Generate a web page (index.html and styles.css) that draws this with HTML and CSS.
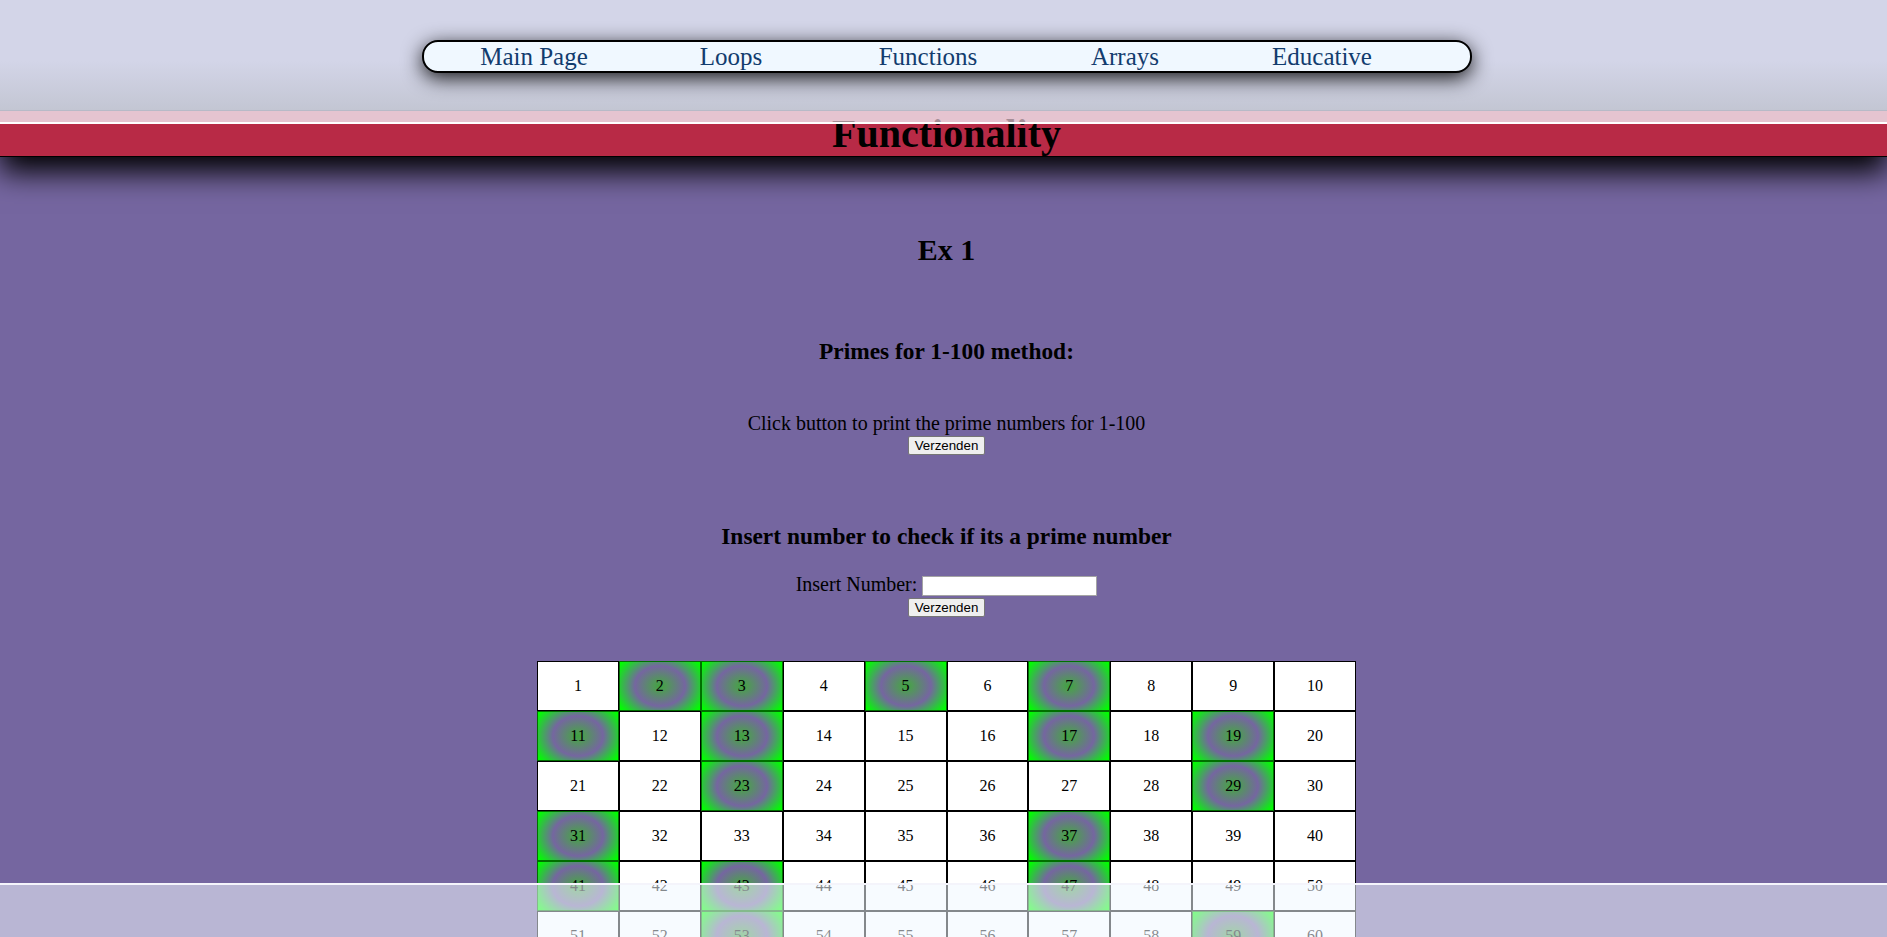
FILE: index.html
```html
<!DOCTYPE html>
<html lang="en">
<head>
<meta charset="utf-8">
<title>Functionality</title>
<link rel="stylesheet" href="styles.css">
</head>
<body>
<header class="site-header">
  <div class="topbar">
    <nav class="nav-pill">
      <a class="nav-link" href="#">Main Page</a>
      <a class="nav-link" href="#">Loops</a>
      <a class="nav-link" href="#">Functions</a>
      <a class="nav-link" href="#">Arrays</a>
      <a class="nav-link" href="#">Educative</a>
    </nav>
  </div>
  <div class="strip"></div>
  <h1 class="page-title">Functionality</h1>
</header>

<main class="content">
  <h2 class="ex-title">Ex 1</h2>

  <h3 class="sub-title primes-title">Primes for 1-100 method:</h3>
  <p class="text-line">Click button to print the prime numbers for 1-100</p>
  <button class="send-btn" type="button">Verzenden</button>

  <h3 class="sub-title check-title">Insert number to check if its a prime number</h3>
  <div class="input-row">
    <label class="input-label" for="num">Insert Number:</label>
    <input class="num-input" id="num" type="text">
  </div>
  <button class="send-btn send-btn-2" type="button">Verzenden</button>

  <div class="grid">
    <div class="cell">1</div><div class="cell prime">2</div><div class="cell prime">3</div><div class="cell">4</div><div class="cell prime">5</div><div class="cell">6</div><div class="cell prime">7</div><div class="cell">8</div><div class="cell">9</div><div class="cell">10</div>
    <div class="cell prime">11</div><div class="cell">12</div><div class="cell prime">13</div><div class="cell">14</div><div class="cell">15</div><div class="cell">16</div><div class="cell prime">17</div><div class="cell">18</div><div class="cell prime">19</div><div class="cell">20</div>
    <div class="cell">21</div><div class="cell">22</div><div class="cell prime">23</div><div class="cell">24</div><div class="cell">25</div><div class="cell">26</div><div class="cell">27</div><div class="cell">28</div><div class="cell prime">29</div><div class="cell">30</div>
    <div class="cell prime">31</div><div class="cell">32</div><div class="cell">33</div><div class="cell">34</div><div class="cell">35</div><div class="cell">36</div><div class="cell prime">37</div><div class="cell">38</div><div class="cell">39</div><div class="cell">40</div>
    <div class="cell prime">41</div><div class="cell">42</div><div class="cell prime">43</div><div class="cell">44</div><div class="cell">45</div><div class="cell">46</div><div class="cell prime">47</div><div class="cell">48</div><div class="cell">49</div><div class="cell">50</div>
    <div class="cell">51</div><div class="cell">52</div><div class="cell prime">53</div><div class="cell">54</div><div class="cell">55</div><div class="cell">56</div><div class="cell">57</div><div class="cell">58</div><div class="cell prime">59</div><div class="cell">60</div>
    <div class="cell prime">61</div><div class="cell">62</div><div class="cell">63</div><div class="cell">64</div><div class="cell">65</div><div class="cell">66</div><div class="cell prime">67</div><div class="cell">68</div><div class="cell">69</div><div class="cell">70</div>
    <div class="cell prime">71</div><div class="cell">72</div><div class="cell prime">73</div><div class="cell">74</div><div class="cell">75</div><div class="cell">76</div><div class="cell">77</div><div class="cell">78</div><div class="cell prime">79</div><div class="cell">80</div>
    <div class="cell">81</div><div class="cell">82</div><div class="cell prime">83</div><div class="cell">84</div><div class="cell">85</div><div class="cell">86</div><div class="cell">87</div><div class="cell">88</div><div class="cell prime">89</div><div class="cell">90</div>
    <div class="cell">91</div><div class="cell">92</div><div class="cell">93</div><div class="cell">94</div><div class="cell">95</div><div class="cell">96</div><div class="cell prime">97</div><div class="cell">98</div><div class="cell">99</div><div class="cell">100</div>
  </div>
</main>

<footer class="site-footer"></footer>
</body>
</html>
```

FILE: styles.css
```css
html {
  scrollbar-width: none;
}

body {
  margin: 0;
  background: #7566a0;
  font-family: "Liberation Serif", "Times New Roman", serif;
  color: #000;
}

/* ---------- header ---------- */
.site-header {
  background: #e4c4d0;
  box-shadow: 0 15px 28px #000;
  position: relative;
  z-index: 1;
}

.topbar {
  height: 111px;
  border-bottom: 1px solid #b7bac7;
  background: linear-gradient(to bottom, #d3d5e8 0%, #d3d5e8 55%, #c3c6d3 100%);
  padding: 40px 0 0 6px;
  box-sizing: border-box;
}

.nav-pill {
  width: 1050px;
  height: 33px;
  margin: 0 auto;
  box-sizing: border-box;
  border: 2px solid #000;
  border-radius: 16px;
  background: #f0f8ff;
  box-shadow: 0 5px 20px rgba(0, 0, 0, 0.9);
  display: grid;
  grid-template-columns: repeat(5, 197px);
  align-items: center;
  padding-left: 12px;
}

.nav-link {
  font-size: 25px;
  line-height: 29px;
  color: #123c6e;
  text-decoration: none;
  white-space: nowrap;
  text-align: center;
}

.strip {
  height: 11px;
  background: rgba(228, 196, 208, 0.72);
  border-bottom: 2px solid #ffffff;
  position: relative;
  z-index: 2;
}

.page-title {
  margin: 0;
  background: #b82a46;
  border-bottom: 1px solid #000;
  font-size: 40px;
  line-height: 20px;
  height: 32px;
  padding: 0 0 0 6px;
  box-sizing: content-box;
  text-align: center;
  font-weight: bold;
}

/* ---------- content ---------- */
.content {
  padding: 0 0 120px 6px;
  display: flex;
  flex-direction: column;
  align-items: center;
  text-align: center;
}

.ex-title {
  margin: 76px 0 0;
  font-size: 30px;
  line-height: 34px;
  font-weight: bold;
}

.sub-title {
  font-size: 23.4px;
  line-height: 27px;
  font-weight: bold;
}

.primes-title {
  margin: 71px 0 0;
}

.check-title {
  margin: 68px 0 0;
}

.text-line {
  margin: 47px 0 0;
  font-size: 20px;
  line-height: 23px;
}

.send-btn {
  margin-top: 1px;
  font-family: "Liberation Sans", Arial, sans-serif;
  font-size: 13.33px;
  line-height: 15px;
  padding: 1px 6px;
  border: 1px solid #767676;
  border-radius: 2px;
  background: #efefef;
  color: #000;
}

.send-btn-2 {
  margin-top: 2px;
}

.input-row {
  margin-top: 23.4px;
  display: flex;
  align-items: flex-end;
  gap: 5px;
}

.input-label {
  font-size: 20px;
  line-height: 23px;
}

.num-input {
  width: 175px;
  height: 20px;
  box-sizing: border-box;
  border: 1px solid #a4a4a4;
  background: #fff;
  padding: 0 2px;
  margin-bottom: 0;
}

/* ---------- number grid ---------- */
.grid {
  margin-top: 44px;
  width: 819px;
  display: grid;
  grid-template-columns: repeat(10, 1fr);
  grid-auto-rows: 50px;
}

.cell {
  border: 1px solid #000;
  background: #fff;
  display: flex;
  align-items: center;
  justify-content: center;
  font-size: 16px;
  line-height: 18px;
}

.cell.prime {
  border-color: #007000;
  background: radial-gradient(ellipse 50px 40px at center, #3fa23f 0%, #4f9a55 12%, rgba(0, 128, 0, 0) 50%, lime 96%);
}

/* ---------- footer ---------- */
.site-footer {
  position: fixed;
  left: 0;
  right: 0;
  bottom: 0;
  height: 52px;
  border-top: 2px solid #f4f4fb;
  background: rgba(240, 248, 255, 0.55);
  z-index: 5;
}
```
